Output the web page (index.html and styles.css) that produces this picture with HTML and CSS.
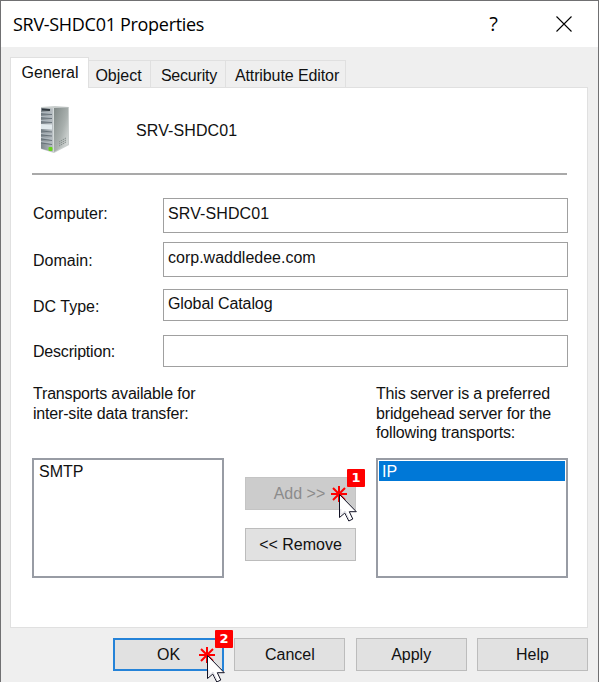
FILE: index.html
```html
<!DOCTYPE html>
<html lang="en">
<head>
<meta charset="utf-8">
<title>SRV-SHDC01 Properties</title>
<link rel="stylesheet" href="styles.css">
</head>
<body>
<svg width="0" height="0" class="defs">
  <defs>
    <g id="click">
      <path d="M8 0V16M0 8H16M2 2L14 14M14 2L2 14" fill="none" stroke="#f00" stroke-width="2"/>
      <path d="M8.5 8.5V31.5L13.8 27L17.8 35L21.8 33L18.3 25.7H25.3Z" fill="#fff" stroke="#111124" stroke-width="1"/>
      <path d="M9.8 23V28.5L14 25L18 33" fill="none" stroke="#dcdce4" stroke-width="1"/>
    </g>
  </defs>
</svg>
<div class="window">
  <header class="titlebar">
    <h1 class="title">SRV-SHDC01 Properties</h1>
    <span class="help">?</span>
    <svg class="close" width="16" height="16" viewBox="0 0 16 16"><path d="M.5 .5L15.5 15.5M15.5 .5L.5 15.5" stroke="#000" stroke-width="1.1"/></svg>
  </header>
  <nav class="tabs">
    <span class="tab active">General</span>
    <span class="tab object">Object</span>
    <span class="tab security">Security</span>
    <span class="tab editor">Attribute Editor</span>
  </nav>
  <main class="panel">
    <div class="identity">
      <svg class="server" width="32" height="50" viewBox="0 0 32 50">
        <defs>
          <linearGradient id="side" x1="0" y1="0" x2="1" y2="1"><stop offset="0" stop-color="#7f8886"/><stop offset=".55" stop-color="#a9b0ae"/><stop offset="1" stop-color="#e3e6e5"/></linearGradient>
          <linearGradient id="front" x1="0" y1="0" x2="1" y2="0"><stop offset="0" stop-color="#7d868c"/><stop offset="1" stop-color="#bcc2c6"/></linearGradient>
        </defs>
        <path d="M2 2L16 1L30 2V40L15 48L2 44Z" fill="#c9cecd"/>
        <path d="M15 3L29 2.5V39L15 47Z" fill="url(#side)"/>
        <path d="M2 3L14 3.5V47L2 43.5Z" fill="url(#front)"/>
        <path d="M3 4.5L11 5" stroke="#30383e" stroke-width="2"/>
        <path d="M2 9L13 9.5M2 13L13 13.5M2 17L13 17.5M2 26L13 27M2 30L13 31M2 34L13 35.5M2 38L13 39.5" stroke="#68737a" stroke-width="1.2"/>
        <path d="M2 7.5L13 8M2 11.5L13 12M2 15.5L13 16M2 28.5L13 29.5M2 32.5L13 34M2 36.5L13 38" stroke="#b3bcc2" stroke-width="1"/>
        <path d="M2 19L13 19.5V24.5L2 24Z" fill="#e2eaed"/>
        <path d="M14.5 3V47" stroke="#d3d9d9" stroke-width="1"/>
        <path d="M20 37L27 33M20 39L27 35M20 41L27 37" stroke="#858e8c" stroke-width="1" stroke-dasharray="1.5 .7"/>
        <rect x="9.5" y="42" width="4" height="4" rx="1" fill="#68d51b"/>
      </svg>
      <span class="name">SRV-SHDC01</span>
    </div>
    <div class="fields">
      <span class="label computer">Computer:</span><div class="input name-value">SRV-SHDC01</div>
      <span class="label domain">Domain:</span><div class="input">corp.waddledee.com</div>
      <span class="label">DC Type:</span><div class="input short catalog">Global Catalog</div>
      <span class="label description">Description:</span><div class="input short"></div>
    </div>
    <div class="transports">
      <section class="column">
        <p class="caption">Transports available for<br>inter-site data transfer:</p>
        <div class="list"><div class="item">SMTP</div></div>
      </section>
      <div class="actions">
        <div class="button disabled"><span class="add">Add &gt;&gt;</span>
          <svg class="pointer" width="28" height="38"><use href="#click"/></svg><span class="badge">1</span>
        </div>
        <div class="button"><span class="remove">&lt;&lt; Remove</span></div>
      </div>
      <section class="column">
        <p class="caption">This server is a preferred<br>bridgehead server for the<br>following transports:</p>
        <div class="list"><div class="item selected">IP</div></div>
      </section>
    </div>
  </main>
  <footer class="footer">
    <div class="button default"><span>OK</span>
      <svg class="pointer" width="28" height="38"><use href="#click"/></svg><span class="badge">2</span>
    </div>
    <div class="button"><span>Cancel</span></div>
    <div class="button"><span>Apply</span></div>
    <div class="button"><span>Help</span></div>
  </footer>
</div>
</body>
</html>
```
FILE: styles.css
```css
* { box-sizing: border-box; }
html, body { margin: 0; height: 682px; overflow: hidden; }
body { font: 16px/20px "Liberation Sans", Arial, sans-serif; color: #111; background: #efefef; }
.defs { display: none; }
.window { height: 682px; border: solid #707072; border-width: 1px 1px 0; overflow: hidden; background: #efefef; }
.titlebar { height: 46px; display: flex; align-items: center; background: #fff; padding: 0 26px 0 12px; color: #000; font-family: "Open Sans", "Noto Sans", sans-serif; }
.title { margin: 0 auto 0 0; font-size: 18px; font-weight: 400; line-height: 24px; letter-spacing: -.3px; padding-bottom: 1px; }
.help { font-size: 20px; line-height: 24px; margin-right: 58px; }
.close { display: block; }
.tabs { height: 40px; padding: 10px 0 0 9px; display: flex; align-items: flex-end; }
.tab { height: 27px; padding-top: 5px; text-align: center; border: 1px solid #e0e0e0; border-width: 1px 1px 0 0; white-space: nowrap; }
.tab.active { width: 79px; height: 31px; padding: 5px 0 0 1px; margin-bottom: -1px; background: #fff; border-left-width: 1px; z-index: 1; }
.tab.object { width: 62px; padding-right: 2px; }
.tab.security { width: 75px; padding-left: 2px; letter-spacing: -.2px; }
.tab.editor { width: 120px; padding-left: 3px; letter-spacing: -.1px; }
.panel { width: 578px; height: 541px; margin-left: 9px; background: #fff; border: 1px solid #e0e0e0; padding: 0 18px 0 21px; }
.identity { height: 87px; width: 535px; border-bottom: 2px solid #a9a9a9; display: flex; align-items: center; }
.server { margin: -2px 0 0 7px; }
.name { margin-left: 65px; letter-spacing: .1px; }
.fields { margin-top: 23px; display: grid; grid-template-columns: 131px 405px; grid-template-rows: 44px 47px 46px 32px; align-items: start; }
.label { padding: 8px 0 0 1px; }
.label.computer { padding-top: 6px; }
.label.domain { padding-top: 9px; }
.label.description { padding-top: 7px; letter-spacing: -.2px; }
.input { height: 35px; border: 1px solid #a0a0a0; padding: 5px 4px 0; }
.input.name-value { letter-spacing: .1px; }
.input.short { height: 32px; padding-top: 4px; }
.input.catalog { letter-spacing: -.1px; }
.transports { margin-top: 17px; display: flex; }
.column { width: 192px; }
.caption { height: 74px; margin: 0; padding-left: 1px; line-height: 19.6px; letter-spacing: -.18px; white-space: nowrap; }
.column:last-child .caption { padding-left: 0; letter-spacing: -.15px; }
.list { height: 120px; border: 2px solid #989ca4; padding: 1px; }
.item { height: 20px; line-height: 22px; padding-left: 4px; }
.selected { background: #0078d7; color: #fff; padding-left: 3px; }
.actions { width: 111px; margin: 93px 20px 0 21px; display: flex; flex-direction: column; gap: 18px; }
.button { position: relative; width: 111px; height: 33px; border: 1px solid #bcbcbc; background: #e1e1e1; display: flex; align-items: center; justify-content: center; padding-top: 1px; }
.add { margin-right: 2px; }
.disabled { background: #ccc; border-color: #c4c4c4; color: #8b8b8b; }
.default { border: 2px solid #2583d8; }
.pointer { position: absolute; left: 85px; top: 8px; overflow: visible; }
.default .pointer { left: 84px; top: 7px; }
.badge { position: absolute; left: 101px; top: -9px; width: 18px; height: 18px; border-radius: 1px; background: #f00; color: #fff; font: bold 13px/18px "DejaVu Sans", sans-serif; text-align: center; }
.default .badge { left: 100px; top: -10px; }
.footer { display: flex; gap: 10.33px; padding: 10px 0 0 112px; }
```
